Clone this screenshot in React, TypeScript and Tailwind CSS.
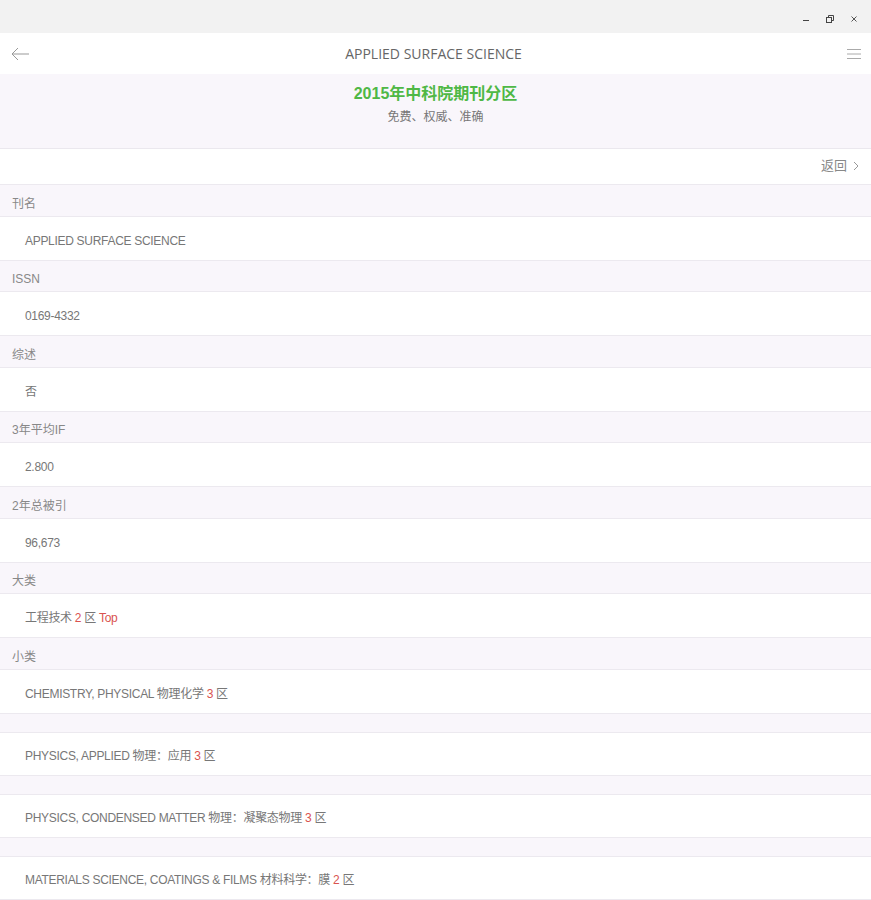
import React from "react"

type Part = { t: string; red?: boolean }

const rows: { label: string; values: Part[][] }[] = [
    { label: "刊名", values: [[{ t: "APPLIED SURFACE SCIENCE" }]] },
    { label: "ISSN", values: [[{ t: "0169-4332" }]] },
    { label: "综述", values: [[{ t: "否" }]] },
    { label: "3年平均IF", values: [[{ t: "2.800" }]] },
    { label: "2年总被引", values: [[{ t: "96,673" }]] },
    { label: "大类", values: [[{ t: "工程技术 " }, { t: "2", red: true }, { t: " 区 " }, { t: "Top", red: true }]] },
    {
        label: "小类",
        values: [
            [{ t: "CHEMISTRY, PHYSICAL 物理化学 " }, { t: "3", red: true }, { t: " 区" }],
            [{ t: "PHYSICS, APPLIED 物理：应用 " }, { t: "3", red: true }, { t: " 区" }],
            [{ t: "PHYSICS, CONDENSED MATTER 物理：凝聚态物理 " }, { t: "3", red: true }, { t: " 区" }],
            [{ t: "MATERIALS SCIENCE, COATINGS & FILMS 材料科学：膜 " }, { t: "2", red: true }, { t: " 区" }],
        ],
    },
]

function App() {
    return (
        <div className="w-[871px] h-[900px] overflow-hidden bg-[#f9f6fb] text-[12px] text-[#777]" style={{ fontFamily: '"Liberation Sans", "Noto Sans CJK SC", sans-serif' }}>
            {/* window title bar */}
            <div className="h-[33px] bg-[#f2f2f2] flex items-end justify-end pb-[9px] pr-[12px] gap-[14px] text-[#333]">
                <span className="w-[10px] flex justify-center"><span className="block w-[6px] h-px bg-[#444] mb-[3px]" /></span>
                <svg width="10" height="10" viewBox="0 0 10 10" fill="none" stroke="#444" strokeWidth="1">
                    <rect x="1.5" y="3.5" width="5" height="5" />
                    <path d="M3.5 3.5V1.5h5v5h-2" />
                </svg>
                <svg width="10" height="10" viewBox="0 0 10 10" stroke="#555" strokeWidth="1">
                    <path d="M2.5 2.5l5 5M7.5 2.5l-5 5" />
                </svg>
            </div>

            {/* app header */}
            <div className="h-[41px] bg-white flex items-center justify-between px-[10px]">
                <div className="w-[20px]">
                    <svg width="20" height="14" viewBox="0 0 20 14" fill="none" stroke="#999" strokeWidth="1">
                        <path d="M19 7H2M8 1L2 7l6 6" />
                    </svg>
                </div>
                <div className="text-[14px] text-[#666]" style={{ fontFamily: '"Open Sans", sans-serif' }}>APPLIED SURFACE SCIENCE</div>
                <div className="w-[24px] flex justify-end">
                    <svg width="14" height="12" viewBox="0 0 14 12" stroke="#aaa" strokeWidth="1">
                        <path d="M0 1.5h14M0 6h14M0 10.5h14" />
                    </svg>
                </div>
            </div>

            {/* banner */}
            <div className="h-[75px] bg-[#f9f6fb] flex flex-col items-center pt-[8px] border-b border-[#ebe8ee]">
                <div className="text-[16px] font-bold text-[#4fb846] leading-[24px]">2015年中科院期刊分区</div>
                <div className="text-[12px] text-[#777] leading-[18px] mt-[2px]">免费、权威、准确</div>
            </div>

            <div className="h-[36px] bg-white flex items-center justify-end pr-[12px] pb-[1px] border-b border-[#ece9ef]">
                <span className="text-[13px] text-[#888]">返回</span>
                <svg className="ml-[6px]" width="6" height="10" viewBox="0 0 6 10" fill="none" stroke="#999" strokeWidth="1">
                    <path d="M1 1l4 4-4 4" />
                </svg>
            </div>

            {rows.map(r => (
                <div key={r.label}>
                    <div className="h-[31.5px] flex items-center px-[12px] pt-[7px] text-[#888] border-b border-[#ece9ef]">{r.label}</div>
                    {r.values.map((v, i) => (
                        <div key={i} className={i > 0 ? "pt-[18px]" : ""}>
                            <div className={`h-[44px] bg-white flex items-center px-[25px] pt-[5px] tracking-[-0.3px] border-b border-[#ece9ef] ${i > 0 ? "border-t" : ""}`}>
                                {v.map((p, j) => (
                                    <span key={j} className={p.red ? "text-[#d9534f]" : ""} style={{ whiteSpace: "pre" }}>{p.t}</span>
                                ))}
                            </div>
                        </div>
                    ))}
                </div>
            ))}
        </div>
    )
}

export default App
